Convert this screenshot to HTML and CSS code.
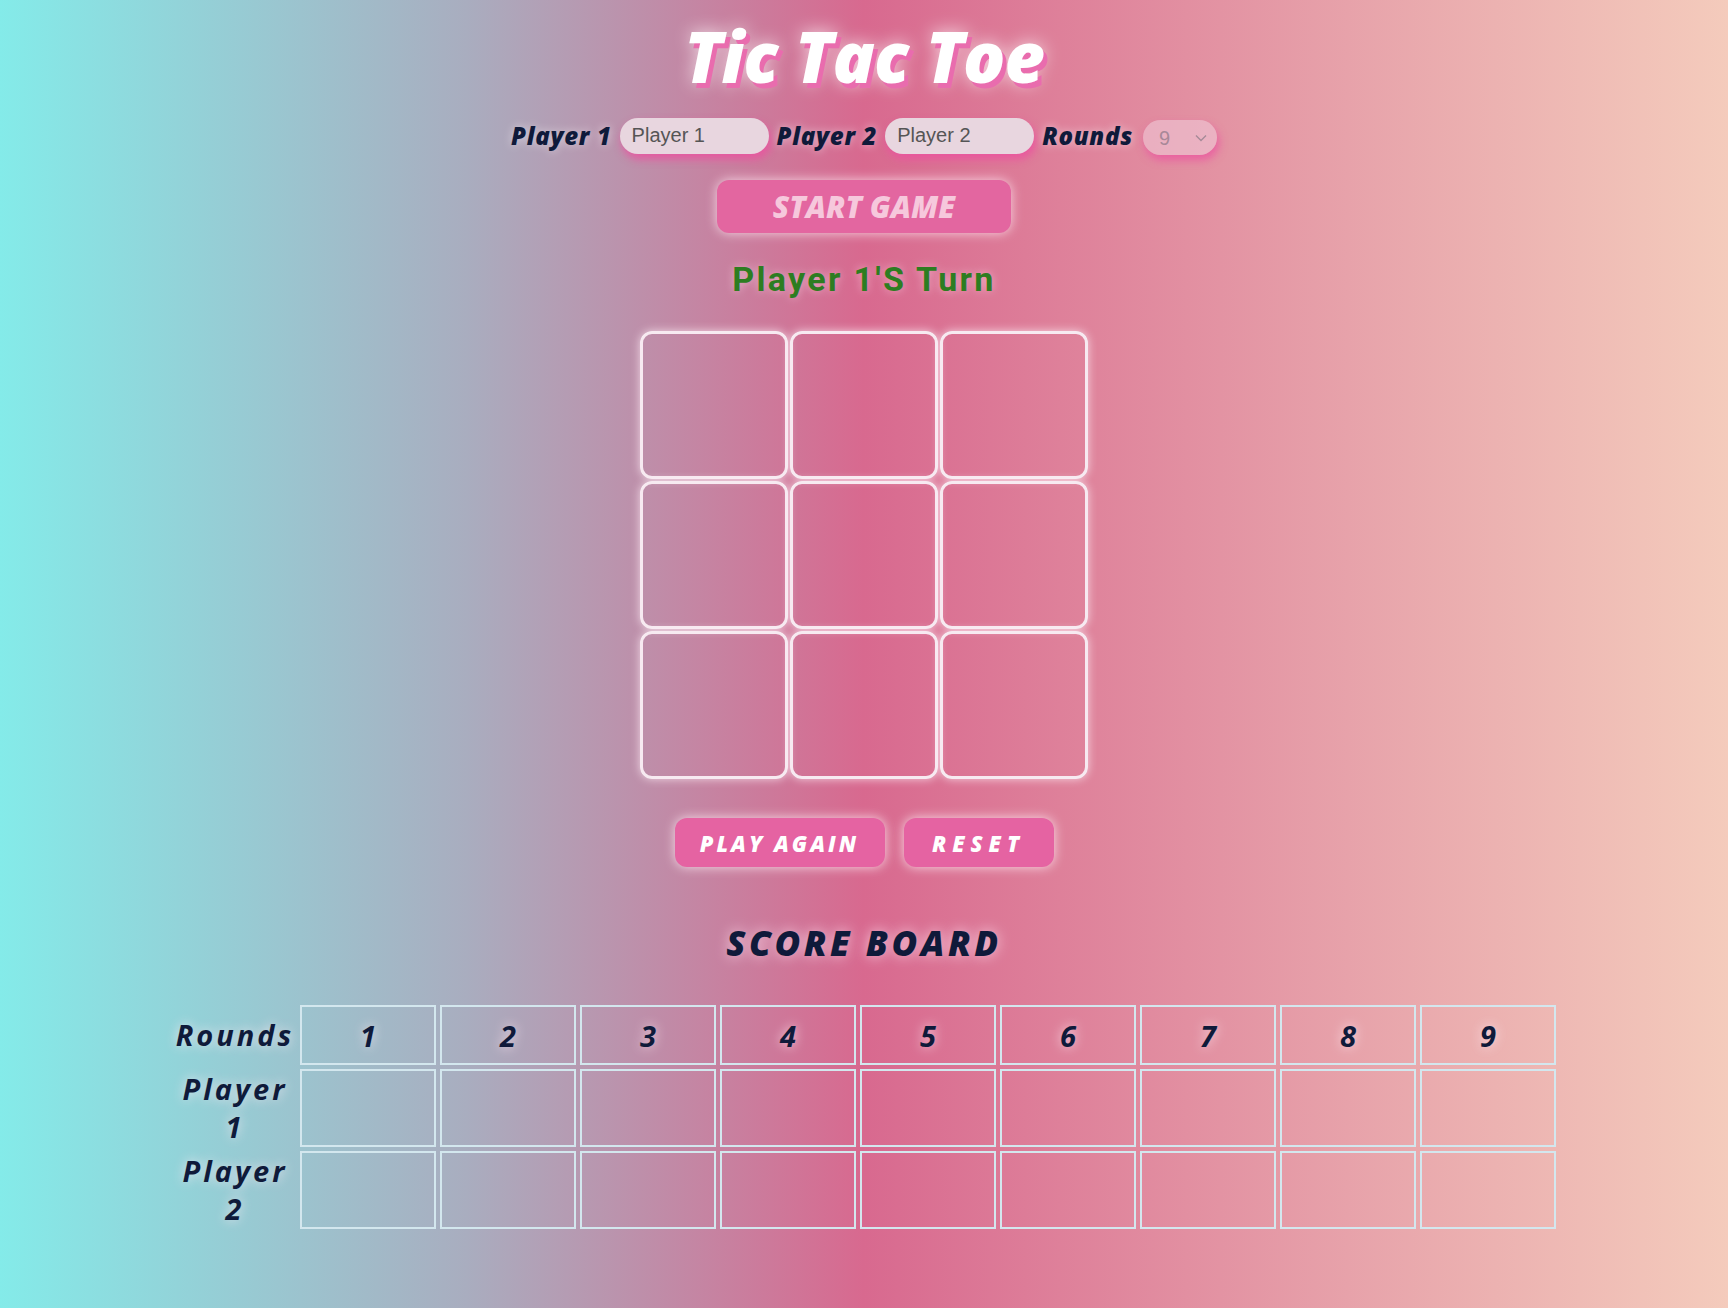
FILE: index.html
```html
<!DOCTYPE html>
<html lang="en">
<head>
<meta charset="utf-8">
<title>Tic Tac Toe</title>
<link rel="stylesheet" href="styles.css">
</head>
<body>
<main class="app">
  <h1 class="title">Tic Tac Toe</h1>
  <div class="controls">
    <label class="ctl-label" for="p1">Player 1</label>
    <input class="name-input" id="p1" type="text" placeholder="Player 1">
    <label class="ctl-label" for="p2">Player 2</label>
    <input class="name-input" id="p2" type="text" placeholder="Player 2">
    <label class="ctl-label" for="rounds">Rounds</label>
    <div class="select-wrap">
      <select class="rounds-select" id="rounds" disabled>
        <option>9</option>
      </select>
      <svg class="chevron" viewBox="0 0 12 8" width="12" height="8"><path d="M1 1.5 L6 6.5 L11 1.5" fill="none" stroke="#a68a98" stroke-width="1.4"/></svg>
    </div>
  </div>
  <button class="start-btn" type="button">START GAME</button>
  <p class="turn">Player 1'S Turn</p>
  <div class="board">
    <div class="cell"></div><div class="cell"></div><div class="cell"></div>
    <div class="cell"></div><div class="cell"></div><div class="cell"></div>
    <div class="cell"></div><div class="cell"></div><div class="cell"></div>
  </div>
  <div class="actions">
    <button class="action-btn play" type="button">PLAY AGAIN</button>
    <button class="action-btn reset" type="button">RESET</button>
  </div>
  <h2 class="score-title">SCORE BOARD</h2>
  <table class="score">
    <tr class="rounds-row">
      <th class="row-head">Rounds</th>
      <th>1</th><th>2</th><th>3</th><th>4</th><th>5</th><th>6</th><th>7</th><th>8</th><th>9</th>
    </tr>
    <tr class="player-row">
      <th class="row-head">Player 1</th>
      <td></td><td></td><td></td><td></td><td></td><td></td><td></td><td></td><td></td>
    </tr>
    <tr class="player-row">
      <th class="row-head">Player 2</th>
      <td></td><td></td><td></td><td></td><td></td><td></td><td></td><td></td><td></td>
    </tr>
  </table>
</main>
</body>
</html>
```
FILE: styles.css
```css
* { box-sizing: border-box; }

html, body {
  margin: 0;
  padding: 0;
}

body {
  min-height: 1308px;
  background: linear-gradient(to right, #84ebe9 0%, #a9adbf 27%, #d8698f 50%, #e7a2aa 78%, #f4cbbc 100%);
  font-family: "Open Sans", "Liberation Sans", sans-serif;
  color: #0f1a3a;
}

.app {
  display: flex;
  flex-direction: column;
  align-items: center;
  padding-top: 14px;
}

.title {
  margin: 0;
  font-size: 70px;
  font-weight: 800;
  font-style: italic;
  line-height: 84px;
  color: #ffffff;
  letter-spacing: -1px;
  text-shadow: 4px 5px 0 #e96cae, 0 0 18px rgba(255, 255, 255, 0.75);
}

.controls {
  display: flex;
  align-items: center;
  gap: 8px;
  margin-top: 18px;
}

.ctl-label {
  font-size: 24px;
  font-weight: 800;
  font-style: italic;
  letter-spacing: 0.7px;
  color: #0f1a3a;
  text-shadow: 0 0 10px rgba(255, 255, 255, 0.55);
}

.name-input {
  width: 149px;
  height: 36px;
  border: none;
  border-radius: 18px;
  padding: 0 12px;
  background: #e8d6df;
  font-family: "Liberation Sans", Arial, sans-serif;
  font-size: 20px;
  color: #555;
  box-shadow: 2px 5px 8px rgba(236, 80, 160, 0.85);
  outline: none;
}

.name-input::placeholder { color: #555; }

.select-wrap {
  position: relative;
  width: 74px;
  height: 35px;
  margin-left: 2px;
  margin-top: 4px;
}

.rounds-select {
  width: 100%;
  height: 100%;
  border: none;
  border-radius: 18px;
  background: rgba(240, 200, 215, 0.6);
  color: #a88898;
  font-family: "Liberation Sans", Arial, sans-serif;
  font-size: 20px;
  padding: 0 0 0 16px;
  appearance: none;
  -webkit-appearance: none;
  box-shadow: 2px 5px 8px rgba(236, 80, 160, 0.75);
  opacity: 1;
}

.chevron {
  position: absolute;
  right: 10px;
  top: 14px;
  pointer-events: none;
}

.start-btn {
  margin-top: 25px;
  width: 294px;
  height: 53px;
  border: none;
  border-radius: 12px;
  background: #e366a0;
  color: #f6c8dc;
  font-family: "Open Sans", "Liberation Sans", sans-serif;
  font-size: 30px;
  font-weight: 800;
  font-style: italic;
  box-shadow: 0 0 12px rgba(255, 235, 245, 0.8);
}

.turn {
  margin: 26px 0 0;
  font-family: Roboto, "Liberation Sans", sans-serif;
  font-size: 34px;
  font-weight: 700;
  letter-spacing: 2.3px;
  line-height: 40px;
  color: #2d7d21;
  text-shadow: 0 0 10px rgba(255, 220, 235, 0.6);
}

.board {
  margin-top: 32px;
  display: grid;
  grid-template-columns: repeat(3, 148px);
  grid-template-rows: repeat(3, 148px);
  gap: 2px;
}

.cell {
  border: 3px solid #f7eaf1;
  border-radius: 12px;
  box-shadow: 0 0 10px rgba(255, 240, 248, 0.75);
}

.actions {
  display: flex;
  gap: 19px;
  margin-top: 39px;
}

.action-btn {
  height: 49px;
  padding: 0;
  border: none;
  border-radius: 12px;
  background: #e563a2;
  color: #ffffff;
  font-family: "Open Sans", "Liberation Sans", sans-serif;
  font-size: 22px;
  font-weight: 800;
  font-style: italic;
  white-space: nowrap;
  box-shadow: 0 0 12px rgba(255, 235, 245, 0.85);
}

.action-btn.play { width: 210px; letter-spacing: 3px; }
.action-btn.reset { width: 150px; letter-spacing: 6px; }

.score-title {
  margin: 52px 0 0;
  font-size: 35px;
  font-weight: 800;
  font-style: italic;
  letter-spacing: 3.5px;
  line-height: 48px;
  color: #0f1a3a;
  text-shadow: 0 0 14px rgba(255, 225, 240, 0.8);
}

.score {
  margin-top: 34px;
  margin-left: 2px;
  border-collapse: separate;
  border-spacing: 4px 4px;
}

.score th,
.score td {
  font-size: 29px;
  font-weight: 700;
  font-style: italic;
  color: #0f1a3a;
  text-shadow: 0 0 12px rgba(255, 235, 245, 0.8);
}

.score th:not(.row-head),
.score td {
  width: 136px;
  border: 2px solid #d3e7ee;
}

.rounds-row th { height: 60px; }
.player-row th, .player-row td { height: 78px; }

.row-head {
  width: 122px;
  letter-spacing: 3px;
  line-height: 38px;
  padding: 0;
  text-align: center;
}
```
